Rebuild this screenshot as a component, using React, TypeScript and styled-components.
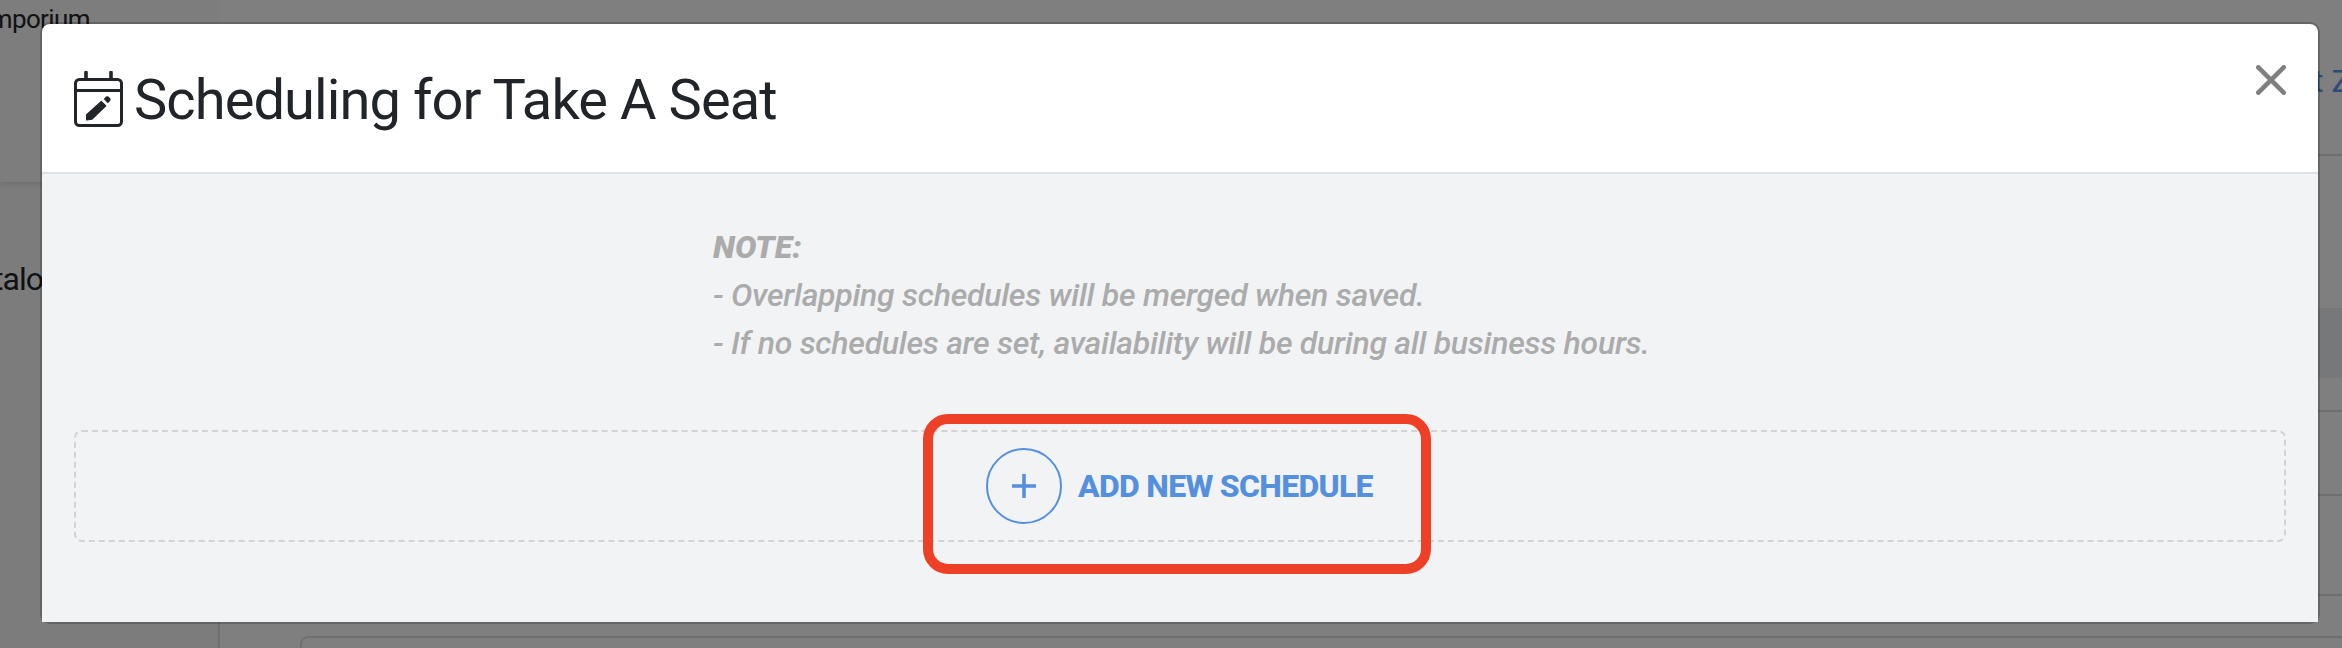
import React from "react";
import styled, { createGlobalStyle } from "styled-components";

const GlobalStyle = createGlobalStyle`
  *, *::before, *::after { box-sizing: border-box; }
  body { margin: 0; background: #ffffff; overflow: hidden; }
`;

const Screen = styled.div`
  position: relative;
  width: 2342px;
  height: 648px;
  overflow: hidden;
  font-family: Roboto, "Liberation Sans", sans-serif;
  color: #212529;
`;

const Page = styled.div`
  display: grid;
  grid-template-columns: 220px 1fr;
  height: 100%;
`;

const Sidebar = styled.aside`
  display: flex;
  flex-direction: column;
  background: #f8f8f8;
  border-right: 2px solid #e0e0e0;
  white-space: nowrap;
`;

const StoreCard = styled.div`
  flex: none;
  height: 182px;
  width: 222px;
  background: #fafafa;
  box-shadow: 0 2px 6px rgba(0, 0, 0, 0.12);
  padding-top: 4px;
  font-size: 26px;
  line-height: 30px;
  letter-spacing: -0.6px;
  direction: rtl;
  padding-right: 132px;
`;

const SidebarItem = styled.div`
  width: 43px;
  padding: 78px 0 0;
  font-size: 32px;
  line-height: 38px;
  letter-spacing: -1px;
  direction: rtl;
`;

const Main = styled.main`
  display: flex;
  flex-direction: column;
  background: #ffffff;
`;

const Row = styled.div<{ $height: number; $shaded?: boolean; $line?: boolean }>`
  flex: none;
  height: ${(p) => p.$height}px;
  background: ${(p) => (p.$shaded ? "#eef0f2" : "transparent")};
  border-bottom: ${(p) => (p.$line ? "2px solid #e0e0e0" : "none")};
`;

const LinkRow = styled(Row)`
  padding: 61px 0 0 2093px;
  font-size: 32px;
  line-height: 40px;
  color: #5598f4;
  white-space: nowrap;
`;

const Panel = styled.div`
  flex: none;
  height: 60px;
  margin: 40px -20px 0 80px;
  border: 2px solid #e0e0e0;
  border-radius: 8px;
`;

const Backdrop = styled.div`
  position: absolute;
  inset: 0;
  padding: 22px 22px 0 40px;
  background: rgba(0, 0, 0, 0.5);
`;

const Dialog = styled.section`
  height: 602px;
  border: 2px solid rgba(0, 0, 0, 0.2);
  border-radius: 10px;
  background: #ffffff;
  background-clip: padding-box;
`;

const DialogHeader = styled.header`
  display: flex;
  align-items: flex-start;
  height: 150px;
  padding: 32px;
  border-bottom: 2px solid #dee2e6;
`;

const TitleIcon = styled.svg`
  flex: none;
  width: 49px;
  height: 56px;
  margin-top: 15px;
`;

const Title = styled.h2`
  flex: 1;
  margin: 10px 0 0 11px;
  font-size: 56px;
  line-height: 68px;
  font-weight: 400;
  letter-spacing: -0.92px;
`;

const CloseButton = styled.button`
  display: flex;
  margin-top: 9px;
  padding: 0;
  border: 0;
  background: none;
  color: #7f7f7f;
`;

const DialogBody = styled.div`
  display: flex;
  flex-direction: column;
  align-items: center;
  height: 448px;
  padding: 48px 32px 0;
  background: #f1f3f5;
`;

const Note = styled.div`
  width: 938px;
  padding: 1px 0 0 2px;
  margin-bottom: 63px;
  color: #ababab;
  font-size: 32px;
  line-height: 48px;
  font-style: italic;
  font-weight: 500;
  white-space: nowrap;
`;

const NoteTitle = styled.div`
  font-weight: 900;
  letter-spacing: 0.1px;
`;

const NoteLine = styled.div`
  letter-spacing: -0.27px;
`;

const AddArea = styled.div`
  position: relative;
  display: flex;
  justify-content: center;
  align-items: center;
  width: 100%;
  height: 112px;
  border: 2px dashed #d2d3d4;
  border-radius: 8px;
`;

const AddButton = styled.button`
  display: flex;
  align-items: center;
  gap: 16px;
  width: 388px;
  padding: 0;
  border: 0;
  background: none;
  color: #5590de;
  font-family: inherit;
  font-size: 32px;
  font-weight: 800;
  line-height: 38px;
  letter-spacing: -0.7px;
  white-space: nowrap;
`;

const PlusCircle = styled.span`
  flex: none;
  display: flex;
  align-items: center;
  justify-content: center;
  width: 76px;
  height: 76px;
  border: 2px solid currentColor;
  border-radius: 50%;
`;

const Highlight = styled.div`
  position: absolute;
  top: -18px;
  left: 847px;
  width: 508px;
  height: 160px;
  border: 10px solid #ed4026;
  border-radius: 25px;
  pointer-events: none;
`;

export default function App() {
  return (
    <Screen>
      <GlobalStyle />
      <Page>
        <Sidebar>
          <StoreCard>Emporium</StoreCard>
          <SidebarItem>Catalo</SidebarItem>
        </Sidebar>
        <Main>
          <LinkRow $height={156} $line>t Z</LinkRow>
          <Row $height={152} />
          <Row $height={70} $shaded />
          <Row $height={34} $line />
          <Row $height={84} $line />
          <Row $height={100} $line />
          <Panel />
        </Main>
      </Page>
      <Backdrop>
        <Dialog role="dialog">
          <DialogHeader>
            <TitleIcon viewBox="0 0 49 56" fill="none" stroke="#212529">
              <rect x="1.5" y="8.5" width="46" height="46" rx="4" strokeWidth="3" />
              <path d="M2 19.5H47" strokeWidth="3" />
              <path d="M12 1.5V8M37 1.5V8" strokeWidth="3.6" strokeLinecap="round" />
              <path d="M27.3 30.4L31.8 34.9L17.8 48.2L12.6 49V43.8Z" fill="#212529" strokeWidth="1.2" strokeLinejoin="round" />
              <path d="M29.7 27.9L32 25.6Q33.3 24.6 34.8 25.8L36.2 27.3Q37.2 28.7 36.1 30L33.8 32.3Z" fill="#212529" stroke="none" />
            </TitleIcon>
            <Title>Scheduling for Take A Seat</Title>
            <CloseButton aria-label="Close">
              <svg width="30" height="30" viewBox="0 0 30 30" stroke="currentColor" strokeWidth="4.6" strokeLinecap="round">
                <path d="M2.3 2.3L27.7 27.7M27.7 2.3L2.3 27.7" />
              </svg>
            </CloseButton>
          </DialogHeader>
          <DialogBody>
            <Note>
              <NoteTitle>NOTE:</NoteTitle>
              <NoteLine>- Overlapping schedules will be merged when saved.</NoteLine>
              <NoteLine>- If no schedules are set, availability will be during all business hours.</NoteLine>
            </Note>
            <AddArea>
              <AddButton>
                <PlusCircle>
                  <svg width="24" height="24" viewBox="0 0 24 24" stroke="currentColor" strokeWidth="3.6">
                    <path d="M12 0V24M0 12H24" />
                  </svg>
                </PlusCircle>
                <span>ADD NEW SCHEDULE</span>
              </AddButton>
              <Highlight />
            </AddArea>
          </DialogBody>
        </Dialog>
      </Backdrop>
    </Screen>
  );
}
